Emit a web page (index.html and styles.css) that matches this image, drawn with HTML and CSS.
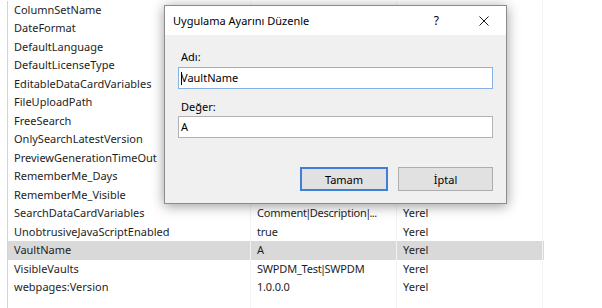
FILE: index.html
```html
<!DOCTYPE html>
<html lang="tr">
  <head>
    <meta charset="UTF-8" />
    <title>Uygulama Ayarları</title>
    <link rel="stylesheet" href="styles.css">
  </head>
  <body>
    <!-- Ayar listesi -->
    <div class="list">
      <div class="row"><span class="cell">ColumnSetName</span><span class="cell"></span><span class="cell"></span></div>
      <div class="row"><span class="cell">DateFormat</span><span class="cell"></span><span class="cell"></span></div>
      <div class="row"><span class="cell">DefaultLanguage</span><span class="cell"></span><span class="cell"></span></div>
      <div class="row"><span class="cell">DefaultLicenseType</span><span class="cell"></span><span class="cell"></span></div>
      <div class="row"><span class="cell">EditableDataCardVariables</span><span class="cell"></span><span class="cell"></span></div>
      <div class="row"><span class="cell">FileUploadPath</span><span class="cell"></span><span class="cell"></span></div>
      <div class="row"><span class="cell">FreeSearch</span><span class="cell"></span><span class="cell"></span></div>
      <div class="row"><span class="cell">OnlySearchLatestVersion</span><span class="cell"></span><span class="cell"></span></div>
      <div class="row"><span class="cell">PreviewGenerationTimeOut</span><span class="cell"></span><span class="cell"></span></div>
      <div class="row"><span class="cell">RememberMe_Days</span><span class="cell"></span><span class="cell"></span></div>
      <div class="row"><span class="cell">RememberMe_Visible</span><span class="cell"></span><span class="cell"></span></div>
      <div class="row"><span class="cell">SearchDataCardVariables</span><span class="cell value">Comment<span class="sep">|</span>Description<span class="sep">|</span><span class="dots">...</span></span><span class="cell">Yerel</span></div>
      <div class="row"><span class="cell">UnobtrusiveJavaScriptEnabled</span><span class="cell value">true</span><span class="cell">Yerel</span></div>
      <div class="row selected"><span class="cell">VaultName</span><span class="cell value">A</span><span class="cell">Yerel</span></div>
      <div class="row"><span class="cell">VisibleVaults</span><span class="cell value">SWPDM_Test<span class="sep">|</span>SWPDM</span><span class="cell">Yerel</span></div>
      <div class="row"><span class="cell">webpages:Version</span><span class="cell value">1.0.0.0</span><span class="cell">Yerel</span></div>
      <div class="row"><span class="cell"></span><span class="cell"></span><span class="cell"></span></div>
    </div>

    <!-- Düzenleme penceresi -->
    <div class="dialog">
      <div class="title-bar">
        <span class="title">Uygulama Ayarını Düzenle</span>
        <span class="help">?</span>
        <svg class="close" width="10" height="10" viewBox="0 0 10 10">
          <path d="M0.5 0.5L9.5 9.5M9.5 0.5L0.5 9.5" stroke="#1a1a1a" stroke-width="1" fill="none" />
        </svg>
      </div>
      <div class="dialog-body">
        <div class="label">Adı:</div>
        <div class="input focused"><span class="caret"></span>VaultName</div>
        <div class="label second">Değer:</div>
        <div class="input">A</div>
        <div class="buttons">
          <button class="btn default">Tamam</button>
          <button class="btn cancel">İptal</button>
        </div>
      </div>
    </div>
  </body>
</html>
```

FILE: styles.css
```css
body {
  margin: 0;
  padding: 0;
  width: 602px;
  height: 308px;
  overflow: hidden;
  background: #fff;
  font-family: "Noto Sans", "Open Sans", sans-serif;
  font-size: 11px;
  color: #1e1e1e;
}

.list {
  margin-left: 7px;
  width: 536px;
  border-left: 1px solid #d4d4d4;
}

.row {
  display: grid;
  grid-template-columns: 243px 146px 146px;
  height: 18.47px;
  line-height: 18.47px;
}

.row.selected {
  background: #d9d9d9;
}

.cell {
  padding-left: 6px;
  white-space: nowrap;
  overflow: hidden;
  border-right: 1px solid #f0f3f8;
}

.cell.value {
  letter-spacing: -0.2px;
}

/* dikey çizgi ayırıcı dar dursun */
.sep {
  margin: 0 -1.5px;
}

.dots {
  letter-spacing: -0.6px;
}

.row:first-child {
  margin-top: 1px;
}

/* Pencere */
.dialog {
  position: absolute;
  left: 164px;
  top: 5px;
  width: 341px;
  height: 197px;
  border: 1px solid #8c8c8c;
  background: #f0f0f0;
  box-shadow: 0 2px 12px rgba(0, 0, 0, 0.4);
  color: #000;
}

.title-bar {
  height: 29px;
  background: #fff;
  display: flex;
  align-items: center;
  padding-left: 8px;
  padding-right: 17px;
}

.title {
  flex: 1;
}

.help {
  font-size: 12px;
  margin-right: 40px;
}

.close {
  display: block;
}

.dialog-body {
  padding: 14px 13px 0 13px;
}

.label {
  line-height: 15px;
  padding-left: 3px;
  margin-bottom: 3px;
}

.label.second {
  margin-top: 10px;
  margin-bottom: 2px;
}

.input {
  height: 20px;
  line-height: 20px;
  border: 1px solid #b2b2b2;
  background: #fff;
  padding-left: 2px;
  position: relative;
}

.input.focused {
  border-color: #86b2e6;
}

.caret {
  position: absolute;
  left: 2px;
  top: 4px;
  width: 1px;
  height: 13px;
  background: #000;
}

.buttons {
  display: flex;
  justify-content: flex-end;
  gap: 10px;
  margin-top: 29px;
}

.btn {
  height: 24px;
  font-family: inherit;
  font-size: 11px;
  color: #000;
  background: #e1e1e1;
  border: 1px solid #adadad;
  padding: 0;
}

.btn.default {
  width: 88px;
  border: 2px solid #3c80d8;
}

.btn.cancel {
  width: 95px;
}
```
